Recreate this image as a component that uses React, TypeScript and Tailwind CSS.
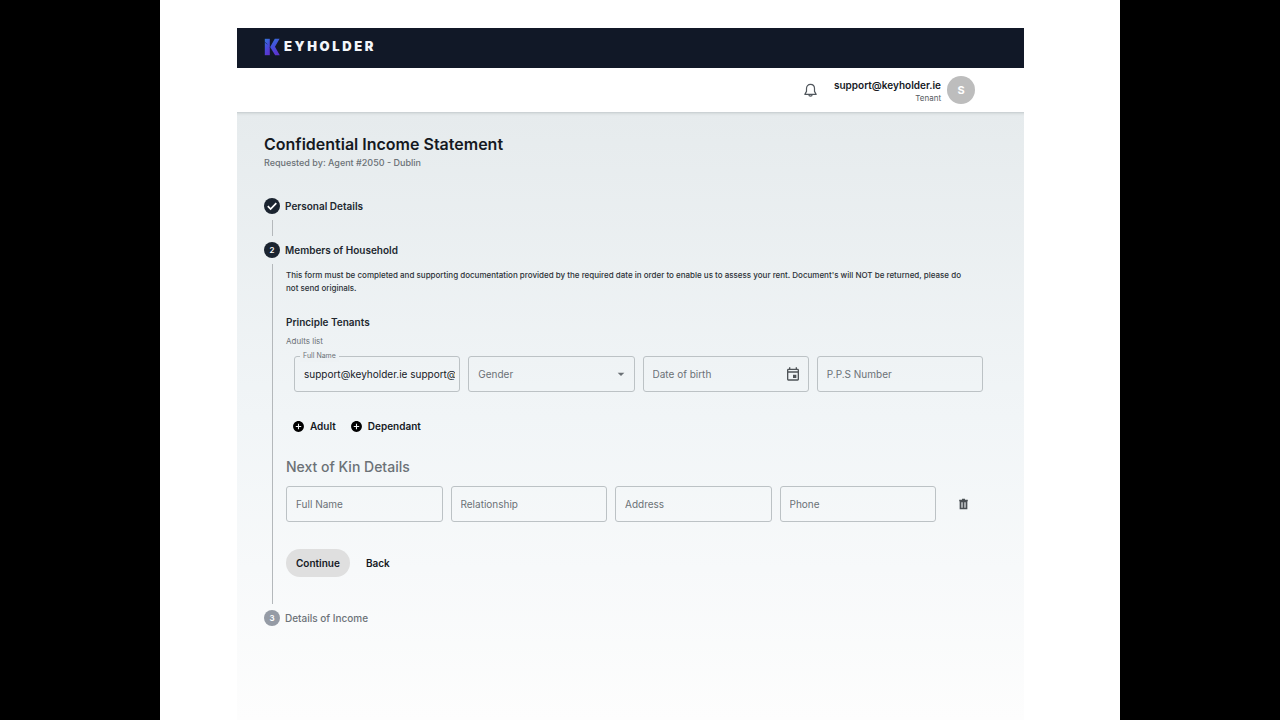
import { useId, useState, type ReactNode } from "react";
import { MdAddCircle, MdArrowDropDown, MdOutlineEvent } from "react-icons/md";

const fieldBox =
  "h-9 w-full min-w-0 rounded-[3px] border border-[#bcc2c5] bg-transparent pl-[9px] pr-1 text-[10px] placeholder:text-[#6b7176] placeholder:opacity-100 focus:outline-none focus:border-[#1b2430]";

function Logo() {
  return (
    <a href="#" aria-label="Keyholder" className="flex items-center gap-1">
      <svg viewBox="0 0 16 18" className="h-[18px] w-4" aria-hidden="true">
        <defs>
          <linearGradient id="logo-fill" x1="0" y1="0" x2="0.4" y2="1">
            <stop offset="0" stopColor="#3578d8" />
            <stop offset="0.5" stopColor="#4450dc" />
            <stop offset="1" stopColor="#5a35cf" />
          </linearGradient>
        </defs>
        <path fill="url(#logo-fill)" d="M.8.800h5v16.400h-5z" />
        <path fill="url(#logo-fill)" d="M10.800.800h4.800L11 8.800l4.800 8.400H11L6 9.200z" />
        <path d="M.5 3.800 3.400 6.300M5.900 9.200 10.600 17.200" fill="none" stroke="#111827" strokeWidth="0.5" />
      </svg>
      <span className="text-[13px] font-black tracking-[0.2em] text-[#f4f6fa]">EYHOLDER</span>
    </a>
  );
}

function BellIcon() {
  return (
    <svg viewBox="0 0 24 24" className="h-[15px] w-[15px]" fill="none" stroke="#50565c" strokeWidth="1.9" strokeLinejoin="round" strokeLinecap="round" aria-hidden="true">
      <path d="M12 2.2c-4 0-6.4 2.9-6.4 6.6v4.6L3 18.2h18l-2.600-4.800V8.800C18.400 5.100 16 2.200 12 2.200Z" />
      <path d="M9.300 18.400a2.700 2.700 0 0 0 5.400 0" />
    </svg>
  );
}

function CheckIcon() {
  return (
    <svg viewBox="0 0 12 12" className="size-3" fill="none" stroke="white" strokeWidth="1.7" role="img" aria-label="Completed">
      <path d="M1.800 6.200 4.600 9l5.700-5.800" />
    </svg>
  );
}

function TrashIcon() {
  return (
    <svg viewBox="0 0 12 14" className="h-3 w-[11px]" aria-hidden="true">
      <path fill="#4a4f53" d="M4.300.800h3.400v1.200H11v1.700H1V2h3.300z" />
      <path fill="#4a4f53" fillRule="evenodd" d="M1.500 3.500h9V13h-9zM3.600 5v6.300h1.300V5zm3.500 0v6.300h1.300V5z" />
    </svg>
  );
}

function StepHeader({ badge, title, muted }: { badge: ReactNode; title: string; muted?: boolean }) {
  return (
    <div className="flex items-center gap-[5px]">
      <span
        className={`flex size-4 items-center justify-center rounded-full text-[8px] font-semibold text-white ${
          muted ? "bg-[#959ba5]" : "bg-[#1b2430]"
        }`}
      >
        {badge}
      </span>
      <h2 className={`text-[10px] leading-4 ${muted ? "font-medium text-[#6c7278]" : "font-semibold text-[#22282f]"}`}>
        {title}
      </h2>
    </div>
  );
}

function TextField({ label }: { label: string }) {
  return <input type="text" aria-label={label} placeholder={label} className={`${fieldBox} text-[#15191f]`} />;
}

function AddButton({ label }: { label: string }) {
  return (
    <button type="button" className="flex h-4 items-center gap-[5px] text-[10px] font-semibold text-[#15191f]">
      <MdAddCircle className="size-[13px] text-black" aria-hidden="true" />
      {label}
    </button>
  );
}

export default function App() {
  const nameId = useId();
  const [name, setName] = useState("support@keyholder.ie support@");

  return (
    <div className="flex min-h-screen bg-black px-[12.5%] font-['Inter','Open_Sans',sans-serif]">
      <div className="flex flex-1 flex-col bg-white pt-7 pr-24 pl-[77px]">
        <header>
          <div className="flex h-10 items-center bg-[#111827] px-[27px] pb-[3px]">
            <Logo />
          </div>
          <div className="flex h-11 items-center justify-end pr-[49px]">
            <button type="button" aria-label="Notifications" className="mr-4">
              <BellIcon />
            </button>
            <div className="mr-1.5 pt-0.5 text-right">
              <p className="text-[10px] leading-[13px] font-semibold text-[#15191f]">support@keyholder.ie</p>
              <p className="text-[8px] leading-3 text-[#555b61]">Tenant</p>
            </div>
            <span className="flex size-7 items-center justify-center rounded-full bg-[#bdbdbd] text-[11px] font-bold text-white">
              S
            </span>
          </div>
        </header>

        <main className="flex-1 bg-linear-to-b from-[#e6ebed] via-[#f1f5f7] to-[#fdfdfd] px-[27px] pt-[21px] shadow-[inset_0_4px_3px_-3px_#bfc5c7]">
          <h1 className="text-[16px] leading-[22px] font-semibold text-[#15191f]">Confidential Income Statement</h1>
          <p className="text-[9px] leading-4 font-medium text-[#6b7176]">Requested by: Agent #2050 - Dublin</p>

          <ol className="mt-[27px] pr-3.5">
            <li>
              <StepHeader badge={<CheckIcon />} title="Personal Details" />
              <div className="my-1.5 ml-2 h-4 border-l border-[#b4b8bb]" />
            </li>

            <li>
              <StepHeader badge="2" title="Members of Household" />
              <form
                className="my-1.5 ml-2 border-l border-[#b4b8bb] pt-[5px] pb-[27px] pl-[13px]"
                onSubmit={(e) => e.preventDefault()}
              >
                <p className="pr-3 text-[8px] leading-[13px] font-medium text-[#2b3036]">
                  This form must be completed and supporting documentation provided by the required date in order to
                  enable us to assess your rent. Document's will NOT be returned, please do not send originals.
                </p>

                <h3 className="mt-5 text-[10px] leading-[14px] font-semibold text-[#22282f]">Principle Tenants</h3>
                <p className="mt-1.5 text-[8px] leading-3 text-[#6b7176]">Adults list</p>

                <div className="mt-[9px] grid grid-cols-4 gap-2 pl-2">
                  <div className="relative">
                    <label
                      htmlFor={nameId}
                      className="absolute -top-1.5 left-1.5 bg-[#eef2f4] px-[3px] text-[7px] leading-3 text-[#6b7176]"
                    >
                      Full Name
                    </label>
                    <input
                      id={nameId}
                      type="text"
                      value={name}
                      onChange={(e) => setName(e.target.value)}
                      className={`${fieldBox} text-[#15191f]`}
                    />
                  </div>
                  <div className="relative">
                    <select aria-label="Gender" defaultValue="" className={`${fieldBox} appearance-none text-[#6b7176]`}>
                      <option value="">Gender</option>
                      <option>Female</option>
                      <option>Male</option>
                      <option>Other</option>
                    </select>
                    <MdArrowDropDown
                      className="pointer-events-none absolute top-2.5 right-1.5 size-4 text-[#6b7176]"
                      aria-hidden="true"
                    />
                  </div>
                  <div className="relative">
                    <TextField label="Date of birth" />
                    <button type="button" aria-label="Choose date" className="absolute top-2.5 right-2">
                      <MdOutlineEvent className="size-4 text-[#4f5458]" aria-hidden="true" />
                    </button>
                  </div>
                  <TextField label="P.P.S Number" />
                </div>

                <div className="mt-[26px] flex gap-3.5 pl-1.5">
                  <AddButton label="Adult" />
                  <AddButton label="Dependant" />
                </div>

                <h3 className="mt-[23px] text-[14px] leading-5 font-medium text-[#6b7176]">Next of Kin Details</h3>
                <div className="mt-[9px] grid grid-cols-[repeat(4,minmax(0,1fr))_39px] items-center gap-2">
                  <TextField label="Full Name" />
                  <TextField label="Relationship" />
                  <TextField label="Address" />
                  <TextField label="Phone" />
                  <button type="button" aria-label="Remove next of kin" className="justify-self-center p-1">
                    <TrashIcon />
                  </button>
                </div>

                <div className="mt-[27px] flex text-[10px] font-semibold text-[#15191f]">
                  <button type="submit" className="h-7 rounded-full bg-[#dfdfdf] px-2.5">
                    Continue
                  </button>
                  <button type="button" className="h-7 rounded-full px-4">
                    Back
                  </button>
                </div>
              </form>
            </li>

            <li>
              <StepHeader badge="3" title="Details of Income" muted />
            </li>
          </ol>
        </main>
      </div>
    </div>
  );
}
